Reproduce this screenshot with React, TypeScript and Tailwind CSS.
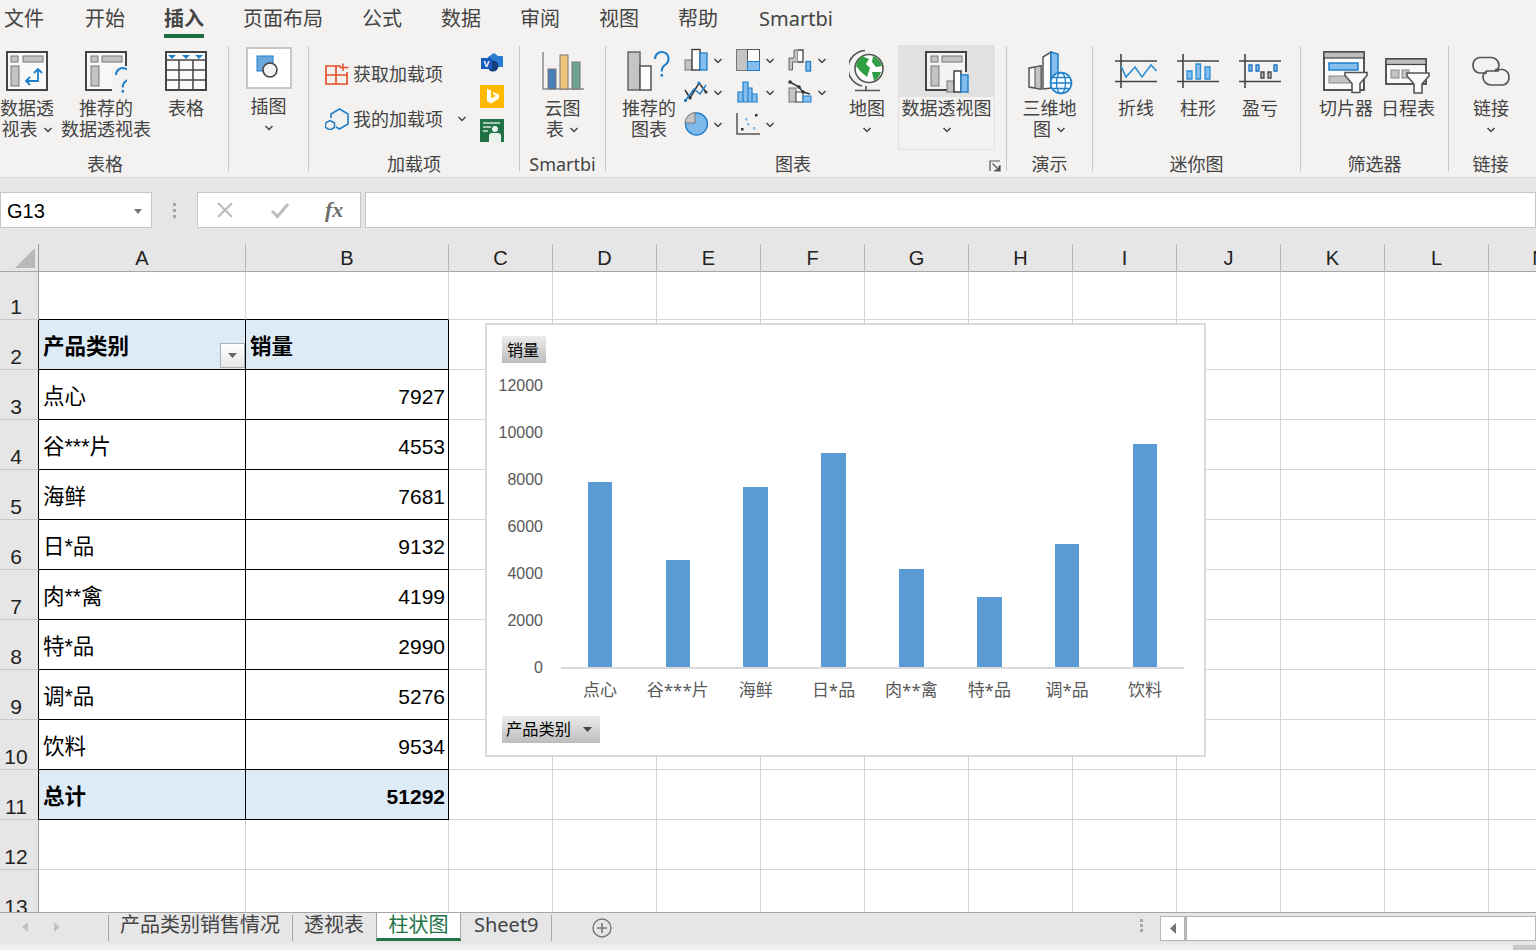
import React from 'react';

const INK = '#444';
const BLUE = '#1f7fc9';
const SKY = '#85bdec';
const GRAY = '#c4c4c4';

const tabs = ['文件', '开始', '插入', '页面布局', '公式', '数据', '审阅', '视图', '帮助'];
const columns = ['A', 'B', 'C', 'D', 'E', 'F', 'G', 'H', 'I', 'J', 'K', 'L', 'M'];
const extraCols = columns.slice(2);
const sales = [
  { name: '点心', value: 7927 },
  { name: '谷***片', value: 4553 },
  { name: '海鲜', value: 7681 },
  { name: '日*品', value: 9132 },
  { name: '肉**禽', value: 4199 },
  { name: '特*品', value: 2990 },
  { name: '调*品', value: 5276 },
  { name: '饮料', value: 9534 },
];
const yTicks = [12000, 10000, 8000, 6000, 4000, 2000, 0];

// Icons are drawn in screen coordinates: the viewBox starts where the icon sits on the page
function Art({ x, y = 46, w, h = 51, children }: { x: number; y?: number; w: number; h?: number; children: React.ReactNode }) {
  return (
    <svg width={w} height={h} viewBox={`${x} ${y} ${w} ${h}`} fill="none" className="block shrink-0">
      {children}
    </svg>
  );
}

function Chevron() {
  return (
    <svg width="10" height="6" viewBox="0 0 10 6" fill="none" className="block shrink-0">
      <path d="M1.5 1 L5 4.5 L8.5 1" stroke={INK} strokeWidth="1.5" />
    </svg>
  );
}

function Question({ x, y }: { x: number; y: number }) {
  return (
    <g>
      <path d={`M${x} ${y + 6} a6.8 6.8 0 1 1 11 5.2 c-3.2 2.4 -4.2 3.6 -4.2 7.4`} stroke={BLUE} strokeWidth="2" />
      <rect x={x + 5.6} y={y + 21} width="2.4" height="2.6" fill={BLUE} />
    </g>
  );
}

function Funnel({ x, y }: { x: number; y: number }) {
  return (
    <path
      d={`M${x} ${y} H${x + 22} V${y + 3} L${x + 15} ${y + 11} V${y + 20} H${x + 7} V${y + 11} L${x} ${y + 3} Z`}
      fill="#fafafa"
      stroke="#555"
      strokeWidth="1.6"
    />
  );
}

function PivotTableIcon() {
  return (
    <Art x={6} w={42}>
      <rect x="7" y="52" width="40" height="38" fill="#f9f9f9" stroke={INK} strokeWidth="2" />
      <rect x="11" y="56" width="7" height="6" fill={GRAY} stroke="#777" />
      <rect x="23" y="56" width="20" height="6" fill={GRAY} stroke="#777" />
      <rect x="11" y="66" width="8" height="20" fill={GRAY} stroke="#777" />
      <path d="M38 69 V81 H26 M34 73 L38 69 L42 73 M30 77 L26 81 L30 85" stroke={BLUE} strokeWidth="1.8" />
    </Art>
  );
}

function RecommendedPivotIcon() {
  return (
    <Art x={85} w={42}>
      <path d="M117 90 H86 V52 H126 V66" fill="#f9f9f9" stroke={INK} strokeWidth="2" />
      <rect x="91" y="56" width="7" height="6" fill={GRAY} stroke="#777" />
      <rect x="102" y="56" width="20" height="6" fill={GRAY} stroke="#777" />
      <rect x="91" y="66" width="8" height="20" fill={GRAY} stroke="#777" />
      <rect x="112" y="67" width="15" height="26" fill="#f3f2f1" />
      <Question x={116} y={69} />
    </Art>
  );
}

function TableIcon() {
  return (
    <Art x={165} w={42}>
      <rect x="166" y="52" width="40" height="38" fill="#fafafa" stroke={INK} strokeWidth="2" />
      <path d="M166 60 H206 M166 70 H206 M166 80 H206 M179 60 V90 M193 60 V90" stroke={INK} strokeWidth="1.5" />
      <path d="M168 55 H176 L172 59 Z M182 55 H190 L186 59 Z M195 55 H203 L199 59 Z" fill={BLUE} />
    </Art>
  );
}

function IllustrationIcon() {
  return (
    <Art x={246} w={46}>
      <rect x="247" y="48" width="44" height="40" fill="#fff" stroke="#c6c6c6" strokeWidth="2" />
      <rect x="257" y="56" width="16" height="15" fill="#6aa7dd" stroke={BLUE} />
      <circle cx="270" cy="70" r="7" fill="#f3f3f3" stroke={INK} strokeWidth="1.6" />
    </Art>
  );
}

function GetAddinIcon() {
  return (
    <Art x={325} y={63} w={24} h={22}>
      <path d="M341 66 H326 V84 H347 V72 M326 75 H347 M336 66 V84" stroke="#e5502a" strokeWidth="1.7" />
      <path d="M343 63.5 V71 M339.5 67.5 H348.5" stroke="#e5502a" strokeWidth="1.5" />
    </Art>
  );
}

function MyAddinIcon() {
  return (
    <Art x={325} y={108} w={24} h={22}>
      <path d="M331 118 V114 L339.5 109 L348 114 V124 L339.5 129 L336 127" stroke={BLUE} strokeWidth="1.6" />
      <path d="M330 120.5 L334.5 123 V127.5 L330 130 L325.5 127.5 V123 Z" stroke={BLUE} strokeWidth="1.5" />
    </Art>
  );
}

function VisioIcon() {
  return (
    <Art x={480} y={52} w={24} h={24}>
      <path d="M488 57 L494 53 L498 56 H503 V67 H488 Z" fill="#2b7cd3" />
      <circle cx="493" cy="66" r="5.5" fill="#14407f" />
      <rect x="481" y="58" width="11" height="11" fill="#185abd" />
      <text x="486.5" y="67" textAnchor="middle" fontSize="9" fontWeight="700" fill="#fff" fontFamily="Liberation Sans, sans-serif">V</text>
    </Art>
  );
}

function BingIcon() {
  return (
    <Art x={480} y={85} w={24} h={24}>
      <rect x="480" y="85" width="24" height="23" fill="#ffb900" />
      <path d="M487 89 L491 90.5 V98.5 L496 96 L493.5 94.5 L492.5 92 L499 94.5 V98.5 L491 103.5 L487 101 Z" fill="#fff" />
    </Art>
  );
}

function PeopleIcon() {
  return (
    <Art x={480} y={118} w={24} h={24}>
      <rect x="480" y="119" width="24" height="23" fill="#217346" />
      <path d="M483 123 H500 M483 127 H491 M483 131 H488" stroke="#cfe5d8" strokeWidth="1.4" />
      <circle cx="495" cy="129" r="3" fill="#e7f2ec" />
      <path d="M489 142 V136 Q489 133 492 133 H498 Q501 133 501 136 V142 Z" fill="#e7f2ec" />
    </Art>
  );
}

function CloudChartIcon() {
  return (
    <Art x={542} w={42}>
      <path d="M543 52 V89 H584" stroke="#8a8a8a" strokeWidth="1.5" />
      <rect x="548" y="69" width="8" height="20" fill="#4a7fb5" stroke="#777" />
      <rect x="560" y="55" width="8" height="34" fill="#eec477" stroke="#777" />
      <rect x="572" y="62" width="8" height="27" fill="#6fa38f" stroke="#777" />
    </Art>
  );
}

function RecommendedChartIcon() {
  return (
    <Art x={628} w={44}>
      <rect x="629" y="52" width="12" height="38" fill={GRAY} stroke="#666" strokeWidth="1.5" />
      <rect x="641" y="66" width="11" height="24" fill="#fff" stroke="#555" strokeWidth="1.5" />
      <Question x={656} y={53} />
    </Art>
  );
}

function ColumnChartIcon() {
  return (
    <Art x={684} y={48} w={24} h={24}>
      <rect x="685" y="60" width="7" height="10" fill={GRAY} stroke="#777" />
      <rect x="692" y="49.5" width="8" height="20.5" fill="#fff" stroke="#333" strokeWidth="1.3" />
      <rect x="700" y="53" width="7" height="17" fill={SKY} stroke={BLUE} strokeWidth="1.3" />
    </Art>
  );
}

function TreemapIcon() {
  return (
    <Art x={736} y={48} w={24} h={24}>
      <rect x="736.5" y="49.5" width="11" height="21" fill={GRAY} stroke="#777" />
      <rect x="747.5" y="49.5" width="12" height="12" fill="#fff" stroke="#555" />
      <rect x="747.5" y="61.5" width="12" height="9" fill={SKY} stroke={BLUE} />
    </Art>
  );
}

function WaterfallIcon() {
  return (
    <Art x={788} y={48} w={24} h={24}>
      <path d="M789 70 V58 H794 V50 H798 V62 H792.5 V70 Z" fill={GRAY} stroke="#666" />
      <path d="M798 50 H803 V62 H798" fill="#fff" stroke="#444" strokeWidth="1.3" />
      <rect x="806" y="61.5" width="4.5" height="9.5" fill={SKY} stroke={BLUE} strokeWidth="1.3" />
    </Art>
  );
}

function LineChartIcon() {
  return (
    <Art x={684} y={80} w={24} h={24}>
      <path d="M685 90 L690 98 L699 83 L706 92" stroke="#333" strokeWidth="1.5" />
      <path d="M685 101 L694 89 L700 94 L706 85" stroke={BLUE} strokeWidth="1.5" />
      <circle cx="685.5" cy="100.5" r="1.6" fill={BLUE} />
      <circle cx="690" cy="98" r="1.6" fill="#333" />
      <circle cx="699" cy="83" r="1.6" fill={BLUE} />
      <circle cx="706" cy="92" r="1.6" fill="#333" />
    </Art>
  );
}

function HistogramIcon() {
  return (
    <Art x={736} y={80} w={24} h={24}>
      <path d="M738 92 H743 V102 H738 Z M743 82 H748 V102 H743 Z M748 88 H752 V102 H748 Z M752 94 H757 V102 H752 Z" fill={SKY} stroke={BLUE} strokeWidth="1.2" />
    </Art>
  );
}

function ComboIcon() {
  return (
    <Art x={788} y={80} w={24} h={24}>
      <rect x="789" y="88" width="7" height="14" fill={GRAY} stroke="#777" />
      <rect x="796" y="92" width="7" height="10" fill="#fff" stroke="#444" />
      <rect x="803" y="96" width="8" height="6" fill={SKY} stroke={BLUE} />
      <path d="M790 82 L799 87 L803 92 L810 94" stroke="#333" strokeWidth="1.5" />
      <circle cx="790" cy="82" r="1.8" fill="#333" />
      <circle cx="799" cy="87" r="1.8" fill="#333" />
      <circle cx="803" cy="92" r="1.8" fill="#333" />
    </Art>
  );
}

function PieIcon() {
  return (
    <Art x={684} y={112} w={24} h={24}>
      <circle cx="696.5" cy="124" r="11" fill="#7fb8ea" stroke={BLUE} strokeWidth="1.4" />
      <path d="M695 123 V112.5 A11 11 0 0 0 685 123 Z" fill={GRAY} stroke="#777" />
    </Art>
  );
}

function ScatterIcon() {
  return (
    <Art x={736} y={112} w={24} h={24}>
      <path d="M737 113 V134 H760" stroke="#555" strokeWidth="1.5" />
      <rect x="741" y="128" width="2.5" height="2.5" fill="#333" />
      <rect x="745" y="118" width="2.5" height="2.5" fill={SKY} />
      <rect x="747" y="123" width="2.5" height="2.5" fill={SKY} />
      <rect x="753" y="127" width="2.5" height="2.5" fill={SKY} />
      <rect x="755" y="114" width="2.5" height="2.5" fill="#333" />
    </Art>
  );
}

function GlobeIcon() {
  return (
    <Art x={849} w={36}>
      <circle cx="869" cy="68.5" r="14" fill="#fff" stroke="#555" strokeWidth="1.6" />
      <path d="M862 56 L869 59 L866 64 L870 68 L867 77 L861 72 L856 66 Q857 60 862 56 Z" fill="#2f9e44" />
      <path d="M873 56 Q880 59 882 66 L876 67 L872 62 Z M872 72 L881 72 Q879 78 874 81 Z" fill="#2f9e44" />
      <path d="M865 50.5 A18 18 0 0 0 862 86" stroke="#555" strokeWidth="1.6" />
      <path d="M866 86 V90 M855 90.5 H880" stroke="#555" strokeWidth="1.6" />
    </Art>
  );
}

function PivotChartIcon() {
  return (
    <Art x={925} w={44}>
      <path d="M947 90 H926 V52 H966 V72" fill="#f4f4f4" stroke={INK} strokeWidth="2" />
      <rect x="931" y="56" width="7" height="6" fill={GRAY} stroke="#777" />
      <rect x="942" y="56" width="20" height="6" fill={GRAY} stroke="#777" />
      <rect x="931" y="66" width="8" height="20" fill={GRAY} stroke="#777" />
      <rect x="947" y="81" width="7" height="11" fill={GRAY} stroke="#777" />
      <rect x="954" y="71" width="7" height="21" fill="#fff" stroke="#333" strokeWidth="1.4" />
      <rect x="961" y="75" width="7" height="17" fill={SKY} stroke={BLUE} strokeWidth="1.4" />
    </Art>
  );
}

function MapIcon() {
  return (
    <Art x={1028} w={46}>
      <path d="M1030 68 L1042 66 V89 L1030 87 Z" fill="#f5f5f5" stroke="#555" strokeWidth="1.5" />
      <path d="M1036 67 L1042 66 V89 L1036 88 Z" fill={GRAY} stroke="#555" />
      <path d="M1044 57 L1052 52 V88 L1044 89 Z" fill="#fff" stroke="#555" strokeWidth="1.5" />
      <path d="M1052 52 L1059 54 V78 L1052 86 Z" fill={SKY} stroke={BLUE} strokeWidth="1.5" />
      <circle cx="1062" cy="83" r="10.5" fill="#f7fbff" stroke={BLUE} strokeWidth="1.6" />
      <ellipse cx="1062" cy="83" rx="4.5" ry="10.5" stroke={BLUE} strokeWidth="1.3" />
      <path d="M1052 83 H1072 M1054 77.5 H1070 M1054 88.5 H1070" stroke={BLUE} strokeWidth="1.3" />
    </Art>
  );
}

function SparkFrame({ x }: { x: number }) {
  return <path d={`M${x} 61 H${x + 42} M${x} 81.5 H${x + 42} M${x + 6} 54 V88`} stroke={INK} strokeWidth="1.6" />;
}

function SparkLineIcon() {
  return (
    <Art x={1115} w={42}>
      <SparkFrame x={1115} />
      <path d="M1121 66 L1126 77 L1135 67 L1142 77 L1151 65 L1156.5 71" stroke="#2a8fd6" strokeWidth="1.6" />
    </Art>
  );
}

function SparkColumnIcon() {
  return (
    <Art x={1177} w={42}>
      <SparkFrame x={1177} />
      <path d="M1187 71 H1192 V79 H1187 Z M1196 64 H1200.5 V79 H1196 Z M1205 67 H1210 V79 H1205 Z" fill={SKY} stroke="#2a8fd6" strokeWidth="1.3" />
    </Art>
  );
}

function SparkWinLossIcon() {
  return (
    <Art x={1238} w={42}>
      <SparkFrame x={1238} />
      <path d="M1248 65 H1251 V71 H1248 Z M1255 65 H1258 V71 H1255 Z M1273 65 H1276 V71 H1273 Z" fill={SKY} stroke="#1a73c4" strokeWidth="1.3" />
      <path d="M1260 72 H1263 V78 H1260 Z M1267 72 H1270 V78 H1267 Z" fill="#bbb" stroke="#444" strokeWidth="1.3" />
    </Art>
  );
}

function SlicerIcon() {
  return (
    <Art x={1323} w={46}>
      <rect x="1324" y="52" width="40" height="38" fill="#fafafa" stroke={INK} strokeWidth="1.8" />
      <rect x="1324" y="52" width="40" height="6" fill="#bdbdbd" stroke={INK} strokeWidth="1.2" />
      <rect x="1329" y="63" width="29" height="7" fill={SKY} stroke={BLUE} strokeWidth="1.5" />
      <rect x="1329" y="76" width="22" height="7" fill={GRAY} stroke="#888" />
      <Funnel x={1345} y={72.5} />
    </Art>
  );
}

function TimelineIcon() {
  return (
    <Art x={1385} w={46}>
      <rect x="1386" y="59" width="40" height="25" fill="#fafafa" stroke={INK} strokeWidth="1.8" />
      <rect x="1386" y="59" width="40" height="5.5" fill="#bdbdbd" stroke={INK} strokeWidth="1.2" />
      <rect x="1391" y="70" width="8" height="8" fill={GRAY} stroke="#888" />
      <rect x="1402" y="70" width="7" height="8" fill={GRAY} stroke="#888" />
      <Funnel x={1407} y={73} />
    </Art>
  );
}

function LinkIcon() {
  return (
    <Art x={1470} w={42}>
      <path d="M1487 73 H1479 A8 8 0 0 1 1479 57.5 H1491 A8 8 0 0 1 1499 65 Q1499 69 1495 71" stroke="#555" strokeWidth="1.7" />
      <path d="M1495 69.5 H1503 A8 8 0 0 1 1503 85 H1491 A8 8 0 0 1 1483 77 Q1483 73 1487 71 H1499" stroke="#555" strokeWidth="1.7" />
    </Art>
  );
}

function RibbonButton({ lines, chevron, className, textClass = 'mt-[1px]', children }: { lines: string[]; chevron?: 'inline' | 'below'; className: string; textClass?: string; children: React.ReactNode }) {
  return (
    <div className={`flex flex-col items-center text-center leading-[21px] ${className}`}>
      {children}
      <div className={textClass}>
        {lines.map((line, i) => (
          <div key={line} className="flex h-[21px] items-center justify-center gap-[5px] whitespace-nowrap">
            {line}
            {chevron === 'inline' && i === lines.length - 1 && <Chevron />}
          </div>
        ))}
        {chevron === 'below' && (
          <div className="flex h-[21px] items-center justify-center">
            <Chevron />
          </div>
        )}
      </div>
    </div>
  );
}

function Group({ label, labelClass = '', className, children }: { label: string; labelClass?: string; className: string; children: React.ReactNode }) {
  return (
    <div className={`relative flex h-[129px] shrink-0 flex-col ${className}`}>
      <div className="flex flex-1">{children}</div>
      <div className={`h-[23px] pt-[1px] text-center leading-[22px] ${labelClass}`}>{label}</div>
    </div>
  );
}

function Separator() {
  return <div className="h-[125px] w-px shrink-0 bg-[#c8c6c4]" />;
}

function SmallChart({ children }: { children: React.ReactNode }) {
  return (
    <div className="flex h-[32px] items-start gap-[5px]">
      {children}
      <div className="mt-[10px]">
        <Chevron />
      </div>
    </div>
  );
}

function Ribbon() {
  return (
    <div className="flex h-[138px] shrink-0 border-b border-[#d6d6d6] bg-[#f3f2f1] pt-[6px] text-[18px] text-[#444]">
      <Group label="表格" labelClass="pr-[18px]" className="w-[228px]">
        <RibbonButton lines={['数据透', '视表']} chevron="inline" className="w-[54px]">
          <PivotTableIcon />
        </RibbonButton>
        <RibbonButton lines={['推荐的', '数据透视表']} className="ml-[6px] w-[92px]">
          <RecommendedPivotIcon />
        </RibbonButton>
        <RibbonButton lines={['表格']} className="ml-[13px] w-[42px]">
          <TableIcon />
        </RibbonButton>
      </Group>
      <Separator />
      <Group label="" className="w-[79px]">
        <RibbonButton lines={['插图']} chevron="below" textClass="-mt-[1px]" className="w-full">
          <IllustrationIcon />
        </RibbonButton>
      </Group>
      <Separator />
      <Group label="加载项" className="w-[210px]">
        <div className="w-[171px] pl-[16px] pt-[17px]">
          <div className="flex h-[22px] items-center gap-[4px]">
            <GetAddinIcon />
            获取加载项
          </div>
          <div className="mt-[23px] flex h-[22px] items-center gap-[4px]">
            <MyAddinIcon />
            我的加载项
            <div className="ml-[10px]">
              <Chevron />
            </div>
          </div>
        </div>
        <div className="flex flex-col gap-[9px] pt-[6px]">
          <VisioIcon />
          <BingIcon />
          <PeopleIcon />
        </div>
      </Group>
      <Separator />
      <Group label="Smartbi" className="w-[85px]">
        <RibbonButton lines={['云图', '表']} chevron="inline" className="w-full">
          <CloudChartIcon />
        </RibbonButton>
      </Group>
      <Separator />
      <Group label="图表" labelClass="pr-[26px]" className="w-[400px]">
        <RibbonButton lines={['推荐的', '图表']} className="ml-[16px] w-[54px]">
          <RecommendedChartIcon />
        </RibbonButton>
        <div className="ml-[8px] grid h-[96px] w-[156px] grid-cols-3 pt-[2px]">
          <SmallChart><ColumnChartIcon /></SmallChart>
          <SmallChart><TreemapIcon /></SmallChart>
          <SmallChart><WaterfallIcon /></SmallChart>
          <SmallChart><LineChartIcon /></SmallChart>
          <SmallChart><HistogramIcon /></SmallChart>
          <SmallChart><ComboIcon /></SmallChart>
          <SmallChart><PieIcon /></SmallChart>
          <SmallChart><ScatterIcon /></SmallChart>
        </div>
        <RibbonButton lines={['地图']} chevron="below" className="ml-[9px] w-[36px]">
          <GlobeIcon />
        </RibbonButton>
        <div className="-mt-px ml-[13px] flex h-[105px] w-[97px] flex-col items-center border border-[#e1e1e1] leading-[21px]">
          <div className="flex h-[51px] w-full justify-center bg-[#e1e1e1]">
            <PivotChartIcon />
          </div>
          <div className="mt-[1px] h-[21px] whitespace-nowrap">数据透视图</div>
          <div className="flex h-[21px] items-center">
            <Chevron />
          </div>
        </div>
        <svg width="12" height="12" viewBox="0 0 12 12" fill="none" className="absolute bottom-[3px] right-[5px]">
          <path d="M1 11 V1 H11 M11 5 V11 H5 M3.5 3.5 L10 10 M6 10 H10 V6" stroke="#555" strokeWidth="1.2" />
        </svg>
      </Group>
      <Separator />
      <Group label="演示" className="w-[85px]">
        <RibbonButton lines={['三维地', '图']} chevron="inline" className="w-full">
          <MapIcon />
        </RibbonButton>
      </Group>
      <Separator />
      <Group label="迷你图" className="w-[207px]">
        <div className="flex gap-[20px] pl-[22px]">
          <RibbonButton lines={['折线']} className="w-[42px]"><SparkLineIcon /></RibbonButton>
          <RibbonButton lines={['柱形']} className="w-[42px]"><SparkColumnIcon /></RibbonButton>
          <RibbonButton lines={['盈亏']} className="w-[42px]"><SparkWinLossIcon /></RibbonButton>
        </div>
      </Group>
      <Separator />
      <Group label="筛选器" className="w-[147px]">
        <div className="flex gap-[8px] pl-[18px]">
          <RibbonButton lines={['切片器']} className="w-[54px]"><SlicerIcon /></RibbonButton>
          <RibbonButton lines={['日程表']} className="w-[54px]"><TimelineIcon /></RibbonButton>
        </div>
      </Group>
      <Separator />
      <Group label="链接" labelClass="pr-[4px]" className="w-[87px]">
        <RibbonButton lines={['链接']} chevron="below" className="ml-[21px] w-[42px]">
          <LinkIcon />
        </RibbonButton>
      </Group>
    </div>
  );
}

function FormulaBar() {
  return (
    <div className="flex h-[66px] shrink-0 items-start bg-[#e6e6e6] pt-[14px]">
      <div className="flex h-[36px] w-[152px] items-center justify-between border border-[#c6c6c6] bg-white pl-[6px] pr-[9px] pt-[2px] text-[20px] text-black [font-family:'Liberation_Sans',sans-serif]">
        G13
        <svg width="8" height="5" viewBox="0 0 8 5"><path d="M0 0 H8 L4 5 Z" fill="#777" /></svg>
      </div>
      <div className="flex h-[36px] w-[45px] flex-col items-center justify-center gap-[3px]">
        <div className="h-[3px] w-[3px] bg-[#a6a6a6]" />
        <div className="h-[3px] w-[3px] bg-[#a6a6a6]" />
        <div className="h-[3px] w-[3px] bg-[#a6a6a6]" />
      </div>
      <div className="flex h-[36px] w-[164px] items-center border border-[#c6c6c6] bg-white pl-[18px]">
        <svg width="18" height="18" viewBox="0 0 18 18" fill="none">
          <path d="M2 2 L16 16 M16 2 L2 16" stroke="#bdbdbd" strokeWidth="2.2" />
        </svg>
        <svg width="20" height="18" viewBox="0 0 20 18" fill="none" className="ml-[36px]">
          <path d="M2 10 L7.5 15.5 L18 3" stroke="#bdbdbd" strokeWidth="3" />
        </svg>
        <span className="ml-[35px] text-[22px] font-bold italic leading-none text-[#6f6f6f] [font-family:'Liberation_Serif',serif]">fx</span>
      </div>
      <div className="ml-[4px] h-[36px] flex-1 border border-[#c6c6c6] bg-white" />
    </div>
  );
}

function PivotChart() {
  return (
    <div className="absolute left-[485px] top-[79px] z-10 h-[434px] w-[721px] border-2 border-[#d9d9d9] bg-white pl-[10px] pt-[11px] text-[#595959]">
      <div className="ml-[5px] flex h-[27px] w-[44px] items-center justify-center bg-gradient-to-b from-[#ececec] to-[#bdbdbd] pr-[2px] text-[16px] text-black">
        销量
      </div>
      <div className="mt-[12px] flex items-start">
        <div className="mt-[1px] flex w-[46px] flex-col gap-[27px] text-right text-[16px] leading-[20px] [font-family:'Liberation_Sans',sans-serif]">
          {yTicks.map((tick) => (
            <div key={tick}>{tick}</div>
          ))}
        </div>
        <div className="ml-[18px] w-[623px]">
          <div className="grid h-[294px] grid-cols-8 border-b-2 border-[#d9d9d9]">
            {sales.map((item) => (
              <div key={item.name} className="flex items-end justify-center">
                <div className="w-[24.5px] bg-[#5b9bd5]" style={{ height: item.value * 0.0234 }} />
              </div>
            ))}
          </div>
          <div className="mt-[11px] grid grid-cols-8 text-center text-[17px] leading-[20px]">
            {sales.map((item) => (
              <div key={item.name} className="whitespace-nowrap">{item.name}</div>
            ))}
          </div>
        </div>
      </div>
      <div className="ml-[5px] mt-[16px] flex h-[27px] w-[98px] items-center gap-[12px] bg-gradient-to-b from-[#ececec] to-[#bdbdbd] pl-[4px] text-[16.25px] text-black">
        产品类别
        <svg width="9" height="5" viewBox="0 0 9 5"><path d="M0 0 H9 L4.5 5 Z" fill="#444" /></svg>
      </div>
    </div>
  );
}

function Sheet() {
  const headerCell = 'flex items-center justify-center border-r border-b border-r-[#b5b5b5] border-b-[#a6a6a6] bg-[#e6e6e6] text-[20px] text-[#222] [font-family:\'Liberation_Sans\',sans-serif]';
  const gridCell = 'border-r border-b border-[#d4d4d4]';
  const nameCell = 'flex items-center border-r border-b border-black pl-[4px] pt-[6px] text-[21.5px] text-black';
  const numberCell = 'flex items-center justify-end border-r border-b border-black pr-[3px] pt-[4px] text-[21px] text-black';
  const rowNums = Array.from({ length: 13 }, (_, i) => i + 1);

  return (
    <div className="relative min-h-0 flex-1 overflow-hidden bg-white">
      <div className="grid grid-cols-[39px_207px_203px_repeat(11,104px)] grid-rows-[28px_48px_repeat(12,50px)] [font-family:'Liberation_Sans','Noto_Sans_CJK_SC',sans-serif]">
        <div className="flex items-end justify-end border-r border-b border-r-[#9e9e9e] border-b-[#a6a6a6] bg-[#e6e6e6] pb-[3px] pr-[3px]">
          <svg width="20" height="20" viewBox="0 0 20 20"><path d="M20 0 V20 H0 Z" fill="#b9b9b9" /></svg>
        </div>
        {columns.map((col) => (
          <div key={col} className={headerCell}>{col}</div>
        ))}
        {rowNums.map((row) => {
          const item = sales[row - 3];
          const inTable = row >= 2 && row <= 11;
          const accent = row === 2 || row === 11;
          const shade = accent ? 'bg-[#ddebf7] font-bold' : '';
          return (
            <React.Fragment key={row}>
              <div
                className={`flex items-end justify-center border-r border-b border-b-[#c8c8c8] bg-[#e6e6e6] pr-[6px] text-[21px] leading-[24px] text-[#222] ${
                  inTable ? 'border-r-black' : 'border-r-[#9e9e9e]'
                }`}
              >
                {row}
              </div>
              {row === 1 && (
                <>
                  <div className="border-r border-b border-r-[#d4d4d4] border-b-black" />
                  <div className="border-r border-b border-r-[#d4d4d4] border-b-black" />
                </>
              )}
              {row === 2 && (
                <>
                  <div className={`relative ${nameCell} ${shade}`}>
                    产品类别
                    <div className="absolute bottom-[1px] right-0 flex h-[25px] w-[25px] items-center justify-center border border-[#b0b0b0] bg-gradient-to-b from-white to-[#e8e8e8]">
                      <svg width="9" height="5" viewBox="0 0 9 5"><path d="M0 0 H9 L4.5 5 Z" fill="#666" /></svg>
                    </div>
                  </div>
                  <div className={`${nameCell} ${shade}`}>销量</div>
                </>
              )}
              {item && (
                <>
                  <div className={nameCell}>{item.name}</div>
                  <div className={numberCell}>{item.value}</div>
                </>
              )}
              {row === 11 && (
                <>
                  <div className={`${nameCell} ${shade}`}>总计</div>
                  <div className={`${numberCell} ${shade}`}>51292</div>
                </>
              )}
              {row >= 12 && (
                <>
                  <div className={gridCell} />
                  <div className={gridCell} />
                </>
              )}
              {extraCols.map((col) => (
                <div key={col} className={gridCell} />
              ))}
            </React.Fragment>
          );
        })}
      </div>
      <PivotChart />
    </div>
  );
}

function SheetTabs() {
  return (
    <div className="flex h-[33px] shrink-0 items-start border-t border-[#a6a6a6] bg-[#e6e6e6] text-[20px] text-[#444]">
      <div className="flex h-[28px] w-[108px] items-center gap-[26px] pl-[22px]">
        <svg width="6" height="10" viewBox="0 0 6 10"><path d="M6 0 V10 L0 5 Z" fill="#c2c2c2" /></svg>
        <svg width="6" height="10" viewBox="0 0 6 10"><path d="M0 0 V10 L6 5 Z" fill="#c2c2c2" /></svg>
      </div>
      <div className="mt-[2px] flex h-[26px] items-center border-l border-[#a6a6a6] pb-[6px] pl-[11px] pr-[12px] leading-[24px]">产品类别销售情况</div>
      <div className="mt-[2px] flex h-[26px] items-center border-l border-[#a6a6a6] pb-[6px] pl-[11px] pr-[12px] leading-[24px]">透视表</div>
      <div className="flex h-[28px] w-[85px] items-center justify-center border-x border-b-[3px] border-x-[#a6a6a6] border-b-[#217346] bg-white pb-[2px] text-[#217346]">柱状图</div>
      <div className="mt-[2px] flex h-[26px] w-[91px] items-center border-r border-[#a6a6a6] pb-[6px] pl-[13px] [font-family:'Noto_Sans',sans-serif]">Sheet9</div>
      <svg width="20" height="20" viewBox="0 0 20 20" fill="none" className="ml-[40px] mt-[5px]">
        <circle cx="10" cy="10" r="9" stroke="#777" strokeWidth="1.4" />
        <path d="M10 5 V15 M5 10 H15" stroke="#777" strokeWidth="1.6" />
      </svg>
      <div className="ml-auto flex h-[25px] items-center">
        <div className="flex flex-col gap-[2px]">
          <div className="h-[3px] w-[3px] bg-[#a6a6a6]" />
          <div className="h-[3px] w-[3px] bg-[#a6a6a6]" />
          <div className="h-[3px] w-[3px] bg-[#a6a6a6]" />
        </div>
        <div className="ml-[17px] mt-[6px] flex h-[25px] w-[25px] items-center justify-center border border-[#b5b5b5] bg-white">
          <svg width="6" height="11" viewBox="0 0 6 11"><path d="M6 0 V11 L0 5.5 Z" fill="#777" /></svg>
        </div>
        <div className="mt-[6px] h-[25px] w-[351px] border border-l-2 border-[#b5b5b5] bg-white" />
      </div>
    </div>
  );
}

export default function App() {
  return (
    <div className="flex h-[950px] w-[1536px] flex-col overflow-hidden bg-[#f3f2f1] [font-family:'Noto_Sans','Noto_Sans_CJK_SC',sans-serif]">
      {/* Menu tabs */}
      <div className="flex h-[40px] shrink-0 gap-[39px] pl-[4px] text-[20px] text-[#444]">
        {tabs.map((tab) => (
          <div key={tab} className={`relative h-[38px] w-auto whitespace-nowrap leading-[38px] ${tab === '插入' ? 'font-bold' : ''} ${tab === '文件' ? 'mr-[2px]' : ''}`}>
            {tab}
            {tab === '插入' && <div className="absolute bottom-0 left-0 h-[4px] w-full bg-[#1e6e42]" />}
          </div>
        ))}
        <div className="ml-[2px] leading-[38px]">Smartbi</div>
      </div>
      <Ribbon />
      <FormulaBar />
      <Sheet />
      <SheetTabs />
      {/* Status strip */}
      <div className="flex h-[5px] shrink-0 justify-end bg-[#f0f0f0]">
        <div className="w-[23px] bg-[#c8c8c8]" />
      </div>
    </div>
  );
}
